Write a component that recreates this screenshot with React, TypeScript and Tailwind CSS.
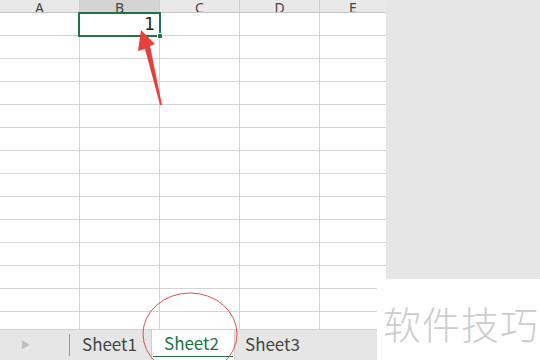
const COLS = ["A", "B", "C", "D", "E"];
const ROWS = Array.from({ length: 13 }, (_, i) => i + 1);

const font = { fontFamily: '"Noto Sans", "Noto Sans CJK SC", sans-serif' };
const cjk = { fontFamily: '"Noto Sans CJK SC", "Noto Sans", sans-serif' };

export default function App() {
  return (
    <div
      className="relative w-[540px] h-[360px] overflow-hidden bg-[#e6e6e6]"
      style={font}
    >
      <div className="flex flex-col w-[386px] h-full bg-white">
        {/* column headers */}
        <div className="flex h-[13px] border-b border-[#c6c6c6] bg-[#e9e9e9] overflow-hidden">
          {COLS.map((c) => (
            <div
              key={c}
              className={`flex shrink-0 justify-center items-end border-r border-[#d0d0d0] text-[14px] leading-none text-[#444] ${
                c === "E" ? "w-[66px] border-r-0" : "w-[80px]"
              } ${c === "B" ? "bg-[#d4d4d4]" : ""}`}
            >
              <span className="translate-y-[3px]">{c}</span>
            </div>
          ))}
        </div>

        {/* grid */}
        {ROWS.map((r) => (
          <div key={r} className="flex h-[23px] border-b border-[#d4d4d4]">
            {COLS.map((c) => (
              <div
                key={c}
                className={`shrink-0 border-r border-[#d4d4d4] ${
                  c === "E" ? "w-[66px] border-r-0" : "w-[80px]"
                }`}
              />
            ))}
          </div>
        ))}
        <div className="flex h-[17px]">
          {COLS.map((c) => (
            <div
              key={c}
              className={`shrink-0 border-r border-[#d4d4d4] ${
                c === "E" ? "w-[66px] border-r-0" : "w-[80px]"
              }`}
            />
          ))}
        </div>

        {/* sheet tabs */}
        <div
          className="flex h-[31px] items-stretch bg-[#e6e6e6] border-t border-[#d0d0d0]"
          style={cjk}
        >
          <div className="flex w-[69px] shrink-0 items-center pl-[21px] text-[9px] text-[#bdbdbd]">
            ▶
          </div>
          <div className="my-[4px] w-px bg-[#9a9a9a]" />
          <div className="flex w-[81px] shrink-0 items-center pl-[12px] pb-[2px] text-[17px] text-[#444]">
            Sheet1
          </div>
          <div className="flex w-[84px] shrink-0 flex-col bg-white border-x border-[#cfcfcf]">
            <div className="flex flex-1 items-center pl-[12px] text-[17px] text-[#217346]">
              Sheet2
            </div>
            <div className="mx-[1px] mb-[4px] h-[2px] bg-[#217346]" />
          </div>
          <div className="flex shrink-0 items-center pl-[10px] pb-[2px] text-[17px] text-[#444]">
            Sheet3
          </div>
        </div>
      </div>

      {/* selected cell B1 */}
      <div className="absolute left-[78px] top-[12px] w-[83px] h-[25px] border-2 border-[#217346]">
        <span
          className="absolute right-[4px] top-[-2px] text-[17px] text-[#222]"
          style={{ fontFamily: '"DejaVu Sans", sans-serif' }}
        >
          1
        </span>
        <div className="absolute right-[-4px] bottom-[-4px] w-[6px] h-[6px] bg-[#217346] border border-white" />
      </div>

      {/* annotations */}
      <svg className="absolute inset-0" width="540" height="360">
        <polygon
          points="141,30 155,44 150,46 162,105 160,105 145,49 138,51"
          fill="#e8403a"
        />
        <ellipse cx="190" cy="334" rx="47" ry="41" fill="none" stroke="#d9534f" strokeWidth="1" />
      </svg>

      {/* watermark */}
      <div
        className="absolute left-[377px] top-[279px] w-[163px] h-[81px] bg-white flex items-center pl-[6px] pt-[6px] text-[38px] font-light tracking-[1px] text-[#cdcdcd]"
        style={cjk}
      >
        软件技巧
      </div>
    </div>
  );
}
